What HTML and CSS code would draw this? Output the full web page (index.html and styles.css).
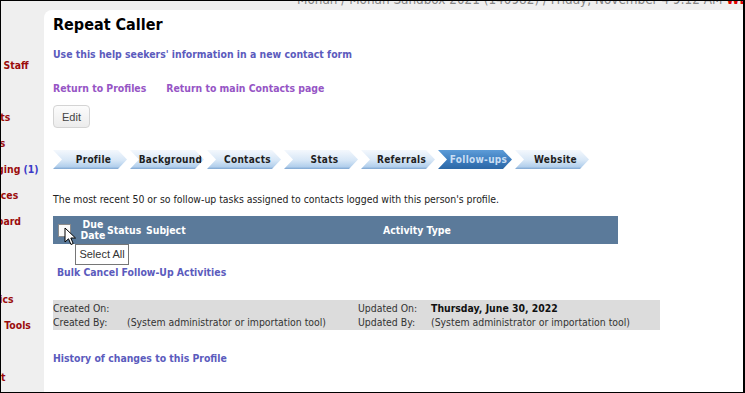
FILE: index.html
```html
<!DOCTYPE html>
<html>

<head>
  <link rel="stylesheet" href="styles.css">
</head>

<body>
  <div class="screen">
    <div class="topbar">
      <div class="topbar-text">Monah / Monah Sandbox 2021 (140982) / Friday, November 4 9:12 AM <span class="welcome">WELCOME</span></div>
    </div>

    <div class="main">
      <ul class="sidebar">
        <li>Search Staff</li>
        <li></li>
        <li>Contacts</li>
        <li>Reports</li>
        <li>Messaging <span class="count">(1)</span></li>
        <li>Resources</li>
        <li>Dashboard</li>
        <li class="plain">Events</li>
        <li></li>
        <li>Statistics</li>
        <li>Admin. Tools</li>
        <li></li>
        <li>Log Out</li>
      </ul>

      <div class="panel">
        <h1 class="title">Repeat Caller</h1>
        <a class="link" href="#">Use this help seekers' information in a new contact form</a>

        <div class="nav-links">
          <a class="link visited" href="#">Return to Profiles</a>
          <a class="link visited" href="#">Return to main Contacts page</a>
        </div>

        <button class="edit-button">Edit</button>

        <div class="tabs">
          <div class="tab">Profile</div>
          <div class="tab">Background</div>
          <div class="tab">Contacts</div>
          <div class="tab">Stats</div>
          <div class="tab">Referrals</div>
          <div class="tab active">Follow-ups</div>
          <div class="tab">Website</div>
        </div>

        <p class="intro">The most recent 50 or so follow-up tasks assigned to contacts logged with this person's profile.</p>

        <table class="followups">
          <tr>
            <th class="col-check">
              <span class="checkbox"></span>
              <svg class="cursor" width="13" height="20" viewBox="0 0 13 20">
                <path d="M1 1 L1 15 L4.5 11.8 L7 17.5 L9.2 16.5 L6.8 11 L11.5 11 Z" fill="#fff" stroke="#000" stroke-width="1" stroke-linejoin="round" />
              </svg>
              <span class="tooltip">Select All</span>
            </th>
            <th class="col-due">Due<br>Date</th>
            <th class="col-status">Status</th>
            <th class="col-subject">Subject</th>
            <th class="col-type">Activity Type</th>
          </tr>
        </table>

        <a class="link bulk" href="#">Bulk Cancel Follow-Up Activities</a>

        <div class="info-box">
          <span>Created On:</span>
          <span></span>
          <span>Updated On:</span>
          <span class="strong">Thursday, June 30, 2022</span>
          <span>Created By:</span>
          <span>(System administrator or importation tool)</span>
          <span>Updated By:</span>
          <span>(System administrator or importation tool)</span>
        </div>

        <a class="link history" href="#">History of changes to this Profile</a>
      </div>
    </div>
  </div>
</body>

</html>
```
FILE: styles.css
```css
body {
  margin: 0;
  font-family: "DejaVu Sans Condensed", "DejaVu Sans", sans-serif;
  font-size: 10.4px;
  color: #222;
}

.screen {
  width: 745px;
  height: 393px;
  box-sizing: border-box;
  border: 1px solid #000;
  border-right-width: 2px;
  background-color: #efefef;
  overflow: hidden;
  display: flex;
  flex-direction: column;
}

.topbar {
  height: 9px;
  flex: none;
  overflow: hidden;
}

.topbar-text {
  margin-top: -8px;
  padding-left: 296px;
  white-space: nowrap;
  font-size: 13.4px;
  line-height: 14px;
  color: #858585;
}

.welcome {
  color: #e00000;
  font-weight: bold;
}

.main {
  flex: 1;
  display: flex;
  min-height: 0;
}

.sidebar {
  width: 43px;
  flex: none;
  margin: 0;
  padding: 42px 0 0 0;
  list-style: none;
  overflow: hidden;
}

.sidebar li {
  height: 26px;
  line-height: 26px;
  margin-left: -37px;
  white-space: nowrap;
  font-weight: bold;
  color: #9b0c0c;
}

.sidebar li.plain {
  color: #333;
}

.sidebar .count {
  color: #3a3ac8;
}

.panel {
  flex: 1;
  background-color: white;
  border-top-left-radius: 8px;
  padding: 4px 0 0 9px;
}

.title {
  margin: 0;
  font-size: 16px;
  line-height: 22px;
  font-weight: bold;
  color: #000;
}

.link {
  display: block;
  font-weight: bold;
  line-height: 14px;
  color: #5b5bbd;
  text-decoration: none;
}

.panel > .link:first-of-type {
  margin-top: 11px;
}

.link.visited {
  color: #9655c5;
}

.nav-links {
  display: flex;
  gap: 20px;
  margin-top: 20px;
}

.edit-button {
  display: block;
  margin-top: 10px;
  width: 37px;
  height: 23px;
  padding: 0;
  border: 1px solid #d4d4d4;
  border-radius: 4px;
  background: linear-gradient(#fcfcfc, #ececec);
  font-family: "Liberation Sans", sans-serif;
  font-size: 11px;
  color: #444;
}

.tabs {
  display: flex;
  gap: 3px;
  margin-top: 22px;
}

.tab {
  width: 74px;
  height: 19px;
  line-height: 19px;
  padding-left: 7px;
  box-sizing: border-box;
  text-align: center;
  font-size: 10px;
  font-weight: bold;
  letter-spacing: 0.3px;
  color: #1e1e1e;
  background: linear-gradient(#f4f8fd 0%, #d6e6f6 55%, #b2cfec 88%, #7ea6d2 100%);
  clip-path: polygon(0 0, calc(100% - 9px) 0, 100% 50%, calc(100% - 9px) 100%, 0 100%, 9px 50%);
}

.tab.active {
  color: #c9def3;
  background: linear-gradient(#5d9cd8 0%, #3d7dbe 55%, #2b67a6 100%);
}

.intro {
  margin: 23px 0 0 0;
  line-height: 14px;
}

.followups {
  margin-top: 10px;
  width: 565px;
  height: 28px;
  border-collapse: collapse;
  background-color: #5b7a9a;
  color: white;
  font-weight: bold;
}

.followups th {
  padding: 0;
  text-align: left;
  line-height: 11px;
  font-size: 10.4px;
}

.col-check {
  position: relative;
  width: 26px;
}

.checkbox {
  display: block;
  margin-left: 5px;
  width: 11px;
  height: 11px;
  border: 1px solid #8a8a8a;
  background-color: #fafafa;
}

.cursor {
  position: absolute;
  left: 11px;
  top: 11px;
}

.tooltip {
  position: absolute;
  left: 22px;
  top: 28px;
  width: 52px;
  height: 19px;
  line-height: 19px;
  border: 1px solid #767676;
  background-color: white;
  text-align: center;
  font-family: "Liberation Sans", sans-serif;
  font-weight: normal;
  font-size: 11px;
  color: #333;
  white-space: nowrap;
}

.followups th.col-due {
  width: 28px;
  text-align: center;
}

.col-status {
  width: 39px;
}

.col-subject {
  width: 237px;
}

.bulk {
  margin: 21px 0 0 4px;
}

.info-box {
  margin-top: 21px;
  width: 607px;
  padding: 1px 0;
  background-color: #dcdcdc;
  display: grid;
  grid-template-columns: 74px 231px 73px 1fr;
  line-height: 14px;
  color: #333;
}

.info-box .strong {
  font-weight: bold;
  color: #111;
}

.history {
  margin-top: 21px;
}
```
